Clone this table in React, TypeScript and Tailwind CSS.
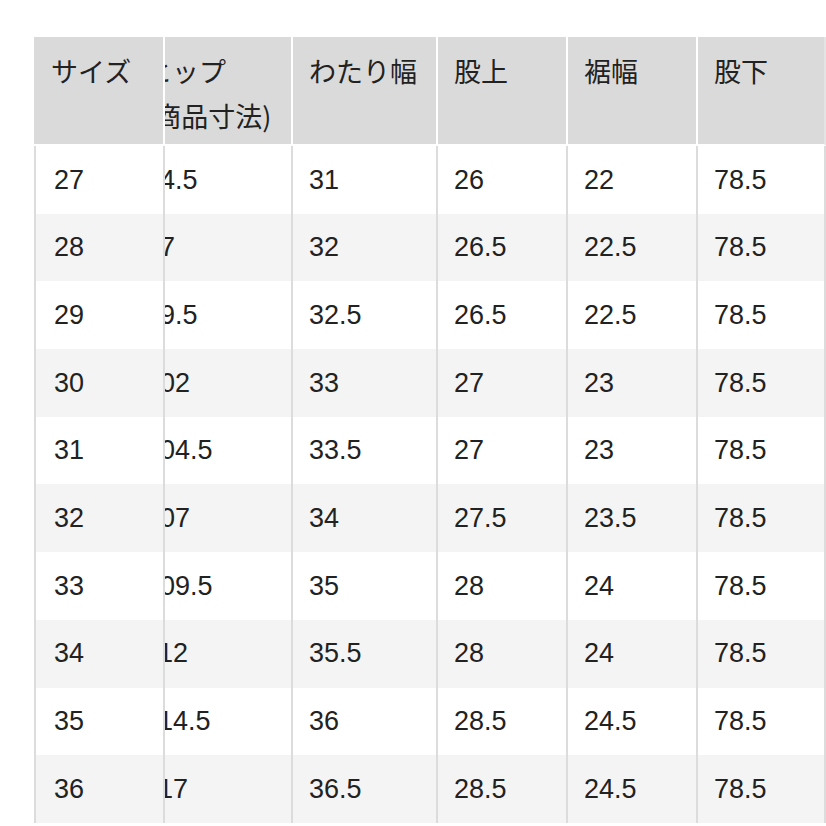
import { useLayoutEffect, useRef } from 'react';

const rows = [
  ['27', '94.5', '31', '26', '22', '78.5'],
  ['28', '97', '32', '26.5', '22.5', '78.5'],
  ['29', '99.5', '32.5', '26.5', '22.5', '78.5'],
  ['30', '102', '33', '27', '23', '78.5'],
  ['31', '104.5', '33.5', '27', '23', '78.5'],
  ['32', '107', '34', '27.5', '23.5', '78.5'],
  ['33', '109.5', '35', '28', '24', '78.5'],
  ['34', '112', '35.5', '28', '24', '78.5'],
  ['35', '114.5', '36', '28.5', '24.5', '78.5'],
  ['36', '117', '36.5', '28.5', '24.5', '78.5'],
];

export default function App() {
  const scrollRef = useRef<HTMLDivElement>(null);

  // the table is scrolled all the way to the right in the screenshot
  useLayoutEffect(() => {
    if (scrollRef.current) scrollRef.current.scrollLeft = 9999;
  }, []);

  return (
    <div className="min-h-screen bg-white pl-[34px] pt-[37px] text-[#222] font-['Liberation_Sans','Noto_Sans_CJK_JP',sans-serif]">
      <div ref={scrollRef} className="w-[792px] overflow-x-auto [scrollbar-width:none]">
        <table className="table-fixed w-[824px] border-separate border-spacing-0 text-[27px]">
          <thead>
            <tr className="font-['Noto_Sans_CJK_JP',sans-serif] leading-[45px] text-left align-top">
              <th className="sticky left-0 z-10 w-[131px] h-[109px] bg-[#dadada] border-r-2 border-r-white border-b-2 border-b-white pl-[17px] pt-[11px] font-normal">
                サイズ
              </th>
              <th className="w-[158px] bg-[#dadada] border-b-2 border-b-white pl-[12px] pt-[11px] font-normal">
                ヒップ
                <br />
                (商品寸法)
              </th>
              <th className="w-[145px] bg-[#dadada] border-l-2 border-l-white border-b-2 border-b-white pl-4 pt-[11px] font-normal">
                わたり幅
              </th>
              <th className="w-[130px] bg-[#dadada] border-l-2 border-l-white border-b-2 border-b-white pl-4 pt-[11px] font-normal">
                股上
              </th>
              <th className="w-[130px] bg-[#dadada] border-l-2 border-l-white border-b-2 border-b-white pl-4 pt-[11px] font-normal">
                裾幅
              </th>
              <th className="w-[130px] bg-[#dadada] border-l-2 border-l-white border-r-2 border-r-[#e4e4e4] border-b-2 border-b-white pl-4 pt-[11px] font-normal">
                股下
              </th>
            </tr>
          </thead>
          <tbody>
            {rows.map((r, i) => {
              const bg = i % 2 === 1 ? 'bg-[#f4f4f4]' : 'bg-white';
              return (
                <tr key={r[0]} className="h-[67.7px]">
                  <td className={`sticky left-0 z-10 border-l-2 border-l-[#dcdcdc] border-r-2 border-r-[#dcdcdc] pl-[18px] ${bg}`}>
                    {r[0]}
                  </td>
                  <td className={`pl-[12px] ${bg}`}>{r[1]}</td>
                  <td className={`border-l-2 border-l-[#dcdcdc] pl-4 ${bg}`}>{r[2]}</td>
                  <td className={`border-l-2 border-l-[#dcdcdc] pl-4 ${bg}`}>{r[3]}</td>
                  <td className={`border-l-2 border-l-[#dcdcdc] pl-4 ${bg}`}>{r[4]}</td>
                  <td className={`border-l-2 border-l-[#dcdcdc] border-r-2 border-r-[#dcdcdc] pl-4 ${bg}`}>
                    {r[5]}
                  </td>
                </tr>
              );
            })}
          </tbody>
        </table>
      </div>
    </div>
  );
}
